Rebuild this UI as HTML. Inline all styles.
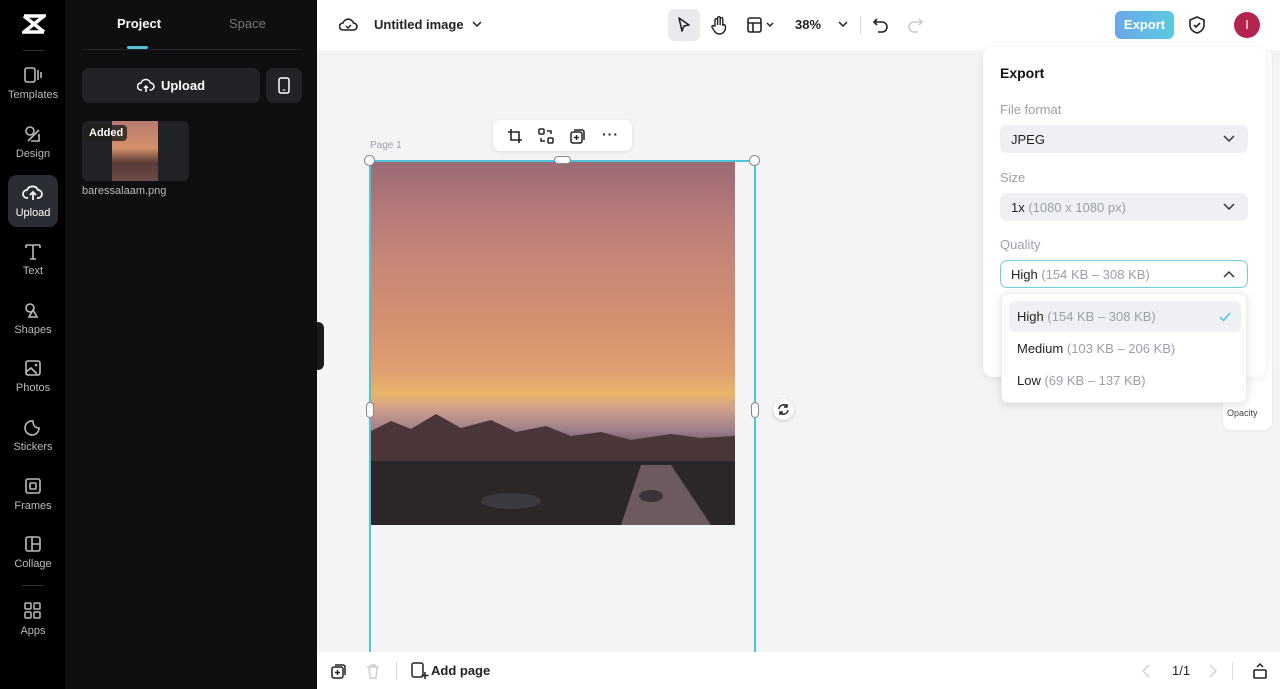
<!DOCTYPE html>
<html><head><meta charset="utf-8"><style>
*{box-sizing:border-box;margin:0;padding:0}
body{width:1280px;height:689px;overflow:hidden;font-family:"Liberation Sans",sans-serif;background:#f3f4f6;position:relative}
.rail{position:absolute;left:0;top:0;width:67px;height:689px;background:#000;border-right:1px solid #1c1c1f}
.ri{position:absolute;left:8px;width:50px;text-align:center;color:#bbb;font-size:11px}
.ri svg{display:block;margin:0 auto 5px}
.panel{position:absolute;left:67px;top:0;width:250px;height:689px;background:#0f0f11}
.top{position:absolute;left:317px;top:0;width:963px;height:50px;background:#fff}
.bot{position:absolute;left:317px;top:652px;width:963px;height:37px;background:#fff}
.ic{position:absolute}
.sel{position:absolute;border:2px solid #4fc3dc}
.h{position:absolute;width:11px;height:11px;border-radius:50%;background:#fff;border:1px solid #888}
.card{position:absolute;left:983px;top:47px;width:283px;height:330px;background:#fff;border-radius:10px;box-shadow:0 2px 10px rgba(0,0,0,.08)}
.lbl{position:absolute;left:17px;font-size:13px;color:#9aa0a8}
.fld{position:absolute;left:17px;width:248px;height:28px;background:#eef0f3;border-radius:7px;font-size:13px;color:#222;padding:7px 11px}
.g{color:#9aa0a8}
.dd{position:absolute;left:1001px;top:293px;width:246px;height:110px;background:#fff;border-radius:7px;box-shadow:0 2px 10px rgba(0,0,0,.12);border:1px solid #eee}
.opt{position:absolute;left:7px;width:232px;height:31px;font-size:13px;padding:8px 8px;color:#222;border-radius:6px}
</style></head><body>
<div class="rail">
 <svg class="ic" style="left:22px;top:14px" width="24" height="20" viewBox="0 0 24 20"><path d="M2 2h20L2 18h20" stroke="#fff" stroke-width="3.5" fill="none"/><path d="M2 2L22 18" stroke="#fff" stroke-width="3.5"/></svg>
 <div style="position:absolute;left:23px;top:50px;width:21px;height:1px;background:#333"></div>
 <div class="ri" style="top:66px"><svg width="20" height="18"><rect x="2" y="2" width="10" height="14" rx="2" fill="none" stroke="#bbb" stroke-width="1.6"/><path d="M15 4v10M18 6v6" stroke="#bbb" stroke-width="1.6"/></svg>Templates</div>
 <div class="ri" style="top:125px"><svg width="20" height="18"><circle cx="7" cy="6" r="4" fill="none" stroke="#bbb" stroke-width="1.6"/><path d="M5 16l11-11M8 16h8V9" fill="none" stroke="#bbb" stroke-width="1.6"/></svg>Design</div>
 <div style="position:absolute;left:8px;top:175px;width:50px;height:52px;background:#2a2d33;border-radius:9px"></div>
 <div class="ri" style="top:183px;color:#fff"><svg width="22" height="19"><path d="M6 15H5a4 4 0 010-8 6 6 0 0111 0 4 4 0 010 8h-1" fill="none" stroke="#fff" stroke-width="1.7"/><path d="M11 17V9M8 12l3-3 3 3" fill="none" stroke="#fff" stroke-width="1.7"/></svg>Upload</div>
 <div class="ri" style="top:242px"><svg width="20" height="18"><path d="M3 3h14M10 3v14M3 3v3M17 3v3M7 17h6" stroke="#bbb" stroke-width="1.6"/></svg>Text</div>
 <div class="ri" style="top:301px"><svg width="20" height="18"><circle cx="7" cy="7" r="4" fill="none" stroke="#bbb" stroke-width="1.6"/><path d="M10 9l4 7H6z" fill="#000" stroke="#bbb" stroke-width="1.6"/></svg>Shapes</div>
 <div class="ri" style="top:359px"><svg width="20" height="18"><rect x="3" y="2" width="14" height="14" rx="2" fill="none" stroke="#bbb" stroke-width="1.6"/><path d="M3 13l5-4 6 6" fill="none" stroke="#bbb" stroke-width="1.6"/><circle cx="13" cy="6" r="1.3" fill="#bbb"/></svg>Photos</div>
 <div class="ri" style="top:418px"><svg width="20" height="18"><path d="M16 10a7 7 0 11-6-7c0 4 2 7 6 7z" fill="none" stroke="#bbb" stroke-width="1.6"/></svg>Stickers</div>
 <div class="ri" style="top:477px"><svg width="20" height="18"><rect x="3" y="2" width="14" height="14" rx="2" fill="none" stroke="#bbb" stroke-width="1.6"/><rect x="7" y="6" width="6" height="6" rx="1" fill="none" stroke="#bbb" stroke-width="1.6"/></svg>Frames</div>
 <div class="ri" style="top:535px"><svg width="20" height="18"><rect x="3" y="2" width="14" height="14" rx="2" fill="none" stroke="#bbb" stroke-width="1.6"/><path d="M9 2v14M9 9h8" stroke="#bbb" stroke-width="1.6"/></svg>Collage</div>
 <div style="position:absolute;left:22px;top:585px;width:22px;height:1px;background:#333"></div>
 <div class="ri" style="top:602px"><svg width="20" height="18"><rect x="2" y="1" width="6" height="6" rx="1" fill="none" stroke="#bbb" stroke-width="1.5"/><rect x="11" y="1" width="6" height="6" rx="1" fill="none" stroke="#bbb" stroke-width="1.5"/><rect x="2" y="10" width="6" height="6" rx="1" fill="none" stroke="#bbb" stroke-width="1.5"/><rect x="11" y="10" width="6" height="6" rx="1" fill="none" stroke="#bbb" stroke-width="1.5"/></svg>Apps</div>
</div>
<div class="panel">
 <div style="position:absolute;left:50px;top:16px;color:#fff;font-size:13px;font-weight:bold">Project</div>
 <div style="position:absolute;left:162px;top:16px;color:#777;font-size:13px">Space</div>
 <div style="position:absolute;left:60px;top:46px;width:21px;height:3px;background:#4fc3dc;border-radius:2px"></div>
 <div style="position:absolute;left:15px;top:49px;width:220px;height:1px;background:#25262a"></div>
 <div style="position:absolute;left:15px;top:68px;width:178px;height:35px;background:#222327;border-radius:7px;color:#fff;font-size:13px;font-weight:bold;text-align:center;line-height:35px"><svg width="18" height="15" style="vertical-align:-3px;margin-right:6px"><path d="M5 12H4a3.5 3.5 0 010-7 5 5 0 019.5 0 3.5 3.5 0 010 7h-1" fill="none" stroke="#fff" stroke-width="1.5"/><path d="M9 14V8M7 10l2-2 2 2" fill="none" stroke="#fff" stroke-width="1.5"/></svg>Upload</div>
 <div style="position:absolute;left:199px;top:68px;width:36px;height:35px;background:#222327;border-radius:7px"><svg width="36" height="35"><rect x="13" y="10" width="10" height="15" rx="2" fill="none" stroke="#fff" stroke-width="1.5"/><path d="M16.5 22h3" stroke="#fff"/></svg></div>
 <div style="position:absolute;left:15px;top:121px;width:107px;height:60px;background:#222327;border-radius:6px;overflow:hidden">
  <div style="position:absolute;left:30px;top:0;width:46px;height:60px;background:linear-gradient(#b77a72,#d48f6a 45%,#5a3a36 70%,#6b4b48)"></div>
  <div style="position:absolute;left:3px;top:4px;background:rgba(30,30,30,.8);color:#fff;font-size:11px;font-weight:bold;padding:2px 4px;border-radius:4px">Added</div>
 </div>
 <div style="position:absolute;left:15px;top:185px;color:#bbb;font-size:11px">baressalaam.png</div>
</div>
<div style="position:absolute;left:317px;top:322px;width:7px;height:48px;background:#1a1a1c;border-radius:0 6px 6px 0"></div>
<div class="top">
 <svg class="ic" style="left:22px;top:16px" width="20" height="18"><path d="M5 14H4a3.5 3.5 0 010-7 5.5 5.5 0 0110.5 0 3.5 3.5 0 010 7H5z" fill="none" stroke="#222" stroke-width="1.6"/><path d="M7 10l2 2 3-3" fill="none" stroke="#222" stroke-width="1.5"/></svg>
 <div style="position:absolute;left:57px;top:17px;font-size:13px;font-weight:bold;color:#222">Untitled image</div>
 <svg class="ic" style="left:155px;top:20px" width="10" height="8"><path d="M1 2l4 4 4-4" fill="none" stroke="#222" stroke-width="1.5"/></svg>
 <div style="position:absolute;left:351px;top:9px;width:32px;height:32px;background:#e8eaee;border-radius:6px"></div>
 <svg class="ic" style="left:359px;top:16px" width="16" height="18"><path d="M3 2l10 7-5 1-2 5z" fill="none" stroke="#222" stroke-width="1.6" stroke-linejoin="round"/></svg>
 <svg class="ic" style="left:393px;top:15px" width="18" height="20"><path d="M5 11V5a1.3 1.3 0 012.6 0v5V3a1.3 1.3 0 012.6 0v7V4a1.3 1.3 0 012.6 0v7a1.3 1.3 0 012.6 0v2a6 6 0 01-6 6 6 6 0 01-5-3l-2.5-4a1.3 1.3 0 012.3-1z" fill="none" stroke="#222" stroke-width="1.4"/></svg>
 <svg class="ic" style="left:430px;top:16px" width="32" height="18"><rect x="1" y="2" width="13" height="14" rx="2" fill="none" stroke="#222" stroke-width="1.6"/><path d="M1 7h13M6 7v9" stroke="#222" stroke-width="1.6"/><path d="M20 7l3 3 3-3" fill="none" stroke="#222" stroke-width="1.5"/></svg>
 <div style="position:absolute;left:478px;top:17px;font-size:13px;font-weight:bold;color:#222">38%</div>
 <svg class="ic" style="left:521px;top:20px" width="10" height="8"><path d="M1 2l4 4 4-4" fill="none" stroke="#222" stroke-width="1.5"/></svg>
 <div style="position:absolute;left:543px;top:16px;width:1px;height:18px;background:#ddd"></div>
 <svg class="ic" style="left:556px;top:16px" width="16" height="18"><path d="M4 3L1 6l3 3M1 6h8a5 5 0 010 10H5" fill="none" stroke="#222" stroke-width="1.6"/></svg>
 <svg class="ic" style="left:590px;top:16px" width="16" height="18"><path d="M12 3l3 3-3 3M15 6H7a5 5 0 000 10h4" fill="none" stroke="#ccc" stroke-width="1.6"/></svg>
 <div style="position:absolute;left:798px;top:11px;width:59px;height:28px;border-radius:6px;background:linear-gradient(90deg,#6aa7e8,#5cc9e0);color:#fff;font-size:13px;font-weight:bold;text-align:center;line-height:28px">Export</div>
 <svg class="ic" style="left:871px;top:15px" width="18" height="20"><path d="M9 2l7 3v5c0 4-3 7-7 8-4-1-7-4-7-8V5z" fill="none" stroke="#222" stroke-width="1.6"/><path d="M6 10l2 2 4-4" fill="none" stroke="#222" stroke-width="1.6"/></svg>
 <div style="position:absolute;left:917px;top:12px;width:26px;height:26px;border-radius:50%;background:#b3244f;color:#fff;font-size:13px;text-align:center;line-height:26px">I</div>
</div>
<!-- canvas -->
<div style="position:absolute;left:370px;top:140px;font-size:10px;color:#9aa0a8">Page 1</div>
<div style="position:absolute;left:371px;top:161px;width:364px;height:364px;overflow:hidden;background:linear-gradient(180deg,#9a6a74 0%,#b77a7a 15%,#c98876 30%,#d4906f 45%,#e0a070 58%,#e9b56a 64%,#cfa08c 68%,#9d7f8a 74%,#5a4548 80%,#3b2e30 90%,#2e2a2c 100%)">
 <svg width="364" height="364" style="position:absolute;left:0;top:0"><path d="M0 270l20-10 20 8 25-15 25 14 30-8 25 12 30-6 25 10 30-4 30 8 40-6 30 4 34-2V364H0z" fill="#4a3638"/><path d="M0 300h364v64H0z" fill="#2d2628"/><path d="M250 364l20-60h30l40 60z" fill="#6d5a5e"/><ellipse cx="140" cy="340" rx="30" ry="8" fill="#3c3a40"/><ellipse cx="280" cy="335" rx="12" ry="6" fill="#3a3438"/></svg>
</div>
<div class="sel" style="left:369px;top:160px;width:387px;height:500px;border-bottom:none"></div>
<div class="h" style="left:364px;top:155px"></div>
<div class="h" style="left:749px;top:155px"></div>
<div style="position:absolute;left:554px;top:156px;width:17px;height:8px;border-radius:4px;background:#fff;border:1px solid #888"></div>
<div style="position:absolute;left:366px;top:402px;width:8px;height:16px;border-radius:4px;background:#fff;border:1px solid #888"></div>
<div style="position:absolute;left:751px;top:402px;width:8px;height:16px;border-radius:4px;background:#fff;border:1px solid #888"></div>
<div style="position:absolute;left:773px;top:399px;width:21px;height:21px;border-radius:50%;background:#fff;box-shadow:0 1px 3px rgba(0,0,0,.2)"><svg width="21" height="21"><path d="M6 10a4.5 4.5 0 018-2.5M15 11a4.5 4.5 0 01-8 2.5" fill="none" stroke="#222" stroke-width="1.4"/><path d="M14 5v3h-3M7 16v-3h3" fill="none" stroke="#222" stroke-width="1.4"/></svg></div>
<div style="position:absolute;left:493px;top:120px;width:139px;height:31px;background:#fff;border-radius:7px;box-shadow:0 1px 4px rgba(0,0,0,.1)">
 <svg style="position:absolute;left:14px;top:8px" width="16" height="16"><path d="M4 1v11h11M1 4h11v11" fill="none" stroke="#222" stroke-width="1.6"/></svg>
 <svg style="position:absolute;left:45px;top:8px" width="16" height="16"><rect x="1" y="1" width="5" height="5" rx="1" fill="none" stroke="#222" stroke-width="1.5"/><rect x="10" y="10" width="5" height="5" rx="1" fill="none" stroke="#222" stroke-width="1.5"/><path d="M9 3h4v3M7 13H3v-3" fill="none" stroke="#222" stroke-width="1.5"/></svg>
 <svg style="position:absolute;left:77px;top:8px" width="16" height="16"><rect x="1" y="4" width="11" height="11" rx="2" fill="none" stroke="#222" stroke-width="1.5"/><path d="M4 2h8a2 2 0 012 2v8" fill="none" stroke="#222" stroke-width="1.5"/><path d="M6.5 7v5M4 9.5h5" stroke="#222" stroke-width="1.4"/></svg>
 <div style="position:absolute;left:109px;top:6px;font-size:14px;font-weight:bold;color:#222;letter-spacing:1px">···</div>
</div>
<!-- right strip -->
<div style="position:absolute;left:1223px;top:50px;width:49px;height:380px;background:#fff;border-radius:8px;box-shadow:0 1px 3px rgba(0,0,0,.06)"></div>
<div style="position:absolute;left:1227px;top:408px;font-size:9px;color:#444">Opacity</div>
<div class="card">
 <div style="position:absolute;left:17px;top:18px;font-size:14px;font-weight:bold;color:#111">Export</div>
 <div class="lbl" style="top:55px">File format</div>
 <div class="fld" style="top:78px">JPEG</div>
 <div class="lbl" style="top:123px">Size</div>
 <div class="fld" style="top:146px">1x <span class="g">(1080 x 1080 px)</span></div>
 <div class="lbl" style="top:190px">Quality</div>
 <div class="fld" style="top:213px;background:#fff;border:1.5px solid #6fd0e4;padding:6px 10px">High <span class="g">(154 KB – 308 KB)</span></div>
 <svg style="position:absolute;left:240px;top:88px" width="12" height="8"><path d="M1 1l5 5 5-5" fill="none" stroke="#333" stroke-width="1.5"/></svg>
 <svg style="position:absolute;left:240px;top:156px" width="12" height="8"><path d="M1 1l5 5 5-5" fill="none" stroke="#333" stroke-width="1.5"/></svg>
 <svg style="position:absolute;left:240px;top:223px" width="12" height="8"><path d="M1 7l5-5 5 5" fill="none" stroke="#333" stroke-width="1.5"/></svg>
</div>
<div class="dd">
 <div class="opt" style="top:7px;background:#eef0f3">High <span class="g">(154 KB – 308 KB)</span><svg style="position:absolute;right:10px;top:11px" width="12" height="10"><path d="M1 5l3.5 3.5L11 1" fill="none" stroke="#4fc3dc" stroke-width="1.5"/></svg></div>
 <div class="opt" style="top:39px">Medium <span class="g">(103 KB – 206 KB)</span></div>
 <div class="opt" style="top:71px">Low <span class="g">(69 KB – 137 KB)</span></div>
</div>
<div class="bot">
 <svg class="ic" style="left:14px;top:11px" width="16" height="16"><rect x="1" y="4" width="11" height="11" rx="2" fill="none" stroke="#222" stroke-width="1.5"/><path d="M4 2h8a2 2 0 012 2v8" fill="none" stroke="#222" stroke-width="1.5"/><path d="M6.5 7v5M4 9.5h5" stroke="#222" stroke-width="1.4"/></svg>
 <svg class="ic" style="left:49px;top:11px" width="14" height="16"><path d="M1 4h12M5 4V2h4v2M3 4l1 11h6l1-11" fill="none" stroke="#ccc" stroke-width="1.4"/></svg>
 <div style="position:absolute;left:79px;top:10px;width:1px;height:18px;background:#ddd"></div>
 <svg class="ic" style="left:94px;top:10px" width="18" height="18"><rect x="1" y="1" width="11" height="14" rx="2" fill="none" stroke="#222" stroke-width="1.5"/><path d="M14 10v7M10.5 13.5h7" stroke="#222" stroke-width="1.5"/></svg>
 <div style="position:absolute;left:114px;top:11px;font-size:13px;font-weight:bold;color:#222">Add page</div>
 <svg class="ic" style="left:825px;top:12px" width="8" height="14"><path d="M7 1L1 7l6 6" fill="none" stroke="#ccc" stroke-width="1.3"/></svg>
 <div style="position:absolute;left:855px;top:11px;font-size:13px;color:#222">1/1</div>
 <svg class="ic" style="left:892px;top:12px" width="8" height="14"><path d="M1 1l6 6-6 6" fill="none" stroke="#ccc" stroke-width="1.3"/></svg>
 <div style="position:absolute;left:915px;top:10px;width:1px;height:18px;background:#ddd"></div>
 <svg class="ic" style="left:935px;top:10px" width="16" height="18"><path d="M5 5l3-3 3 3" fill="none" stroke="#222" stroke-width="1.5"/><rect x="2" y="8" width="12" height="8" rx="1" fill="none" stroke="#222" stroke-width="1.6"/></svg>
</div>
</body></html>
